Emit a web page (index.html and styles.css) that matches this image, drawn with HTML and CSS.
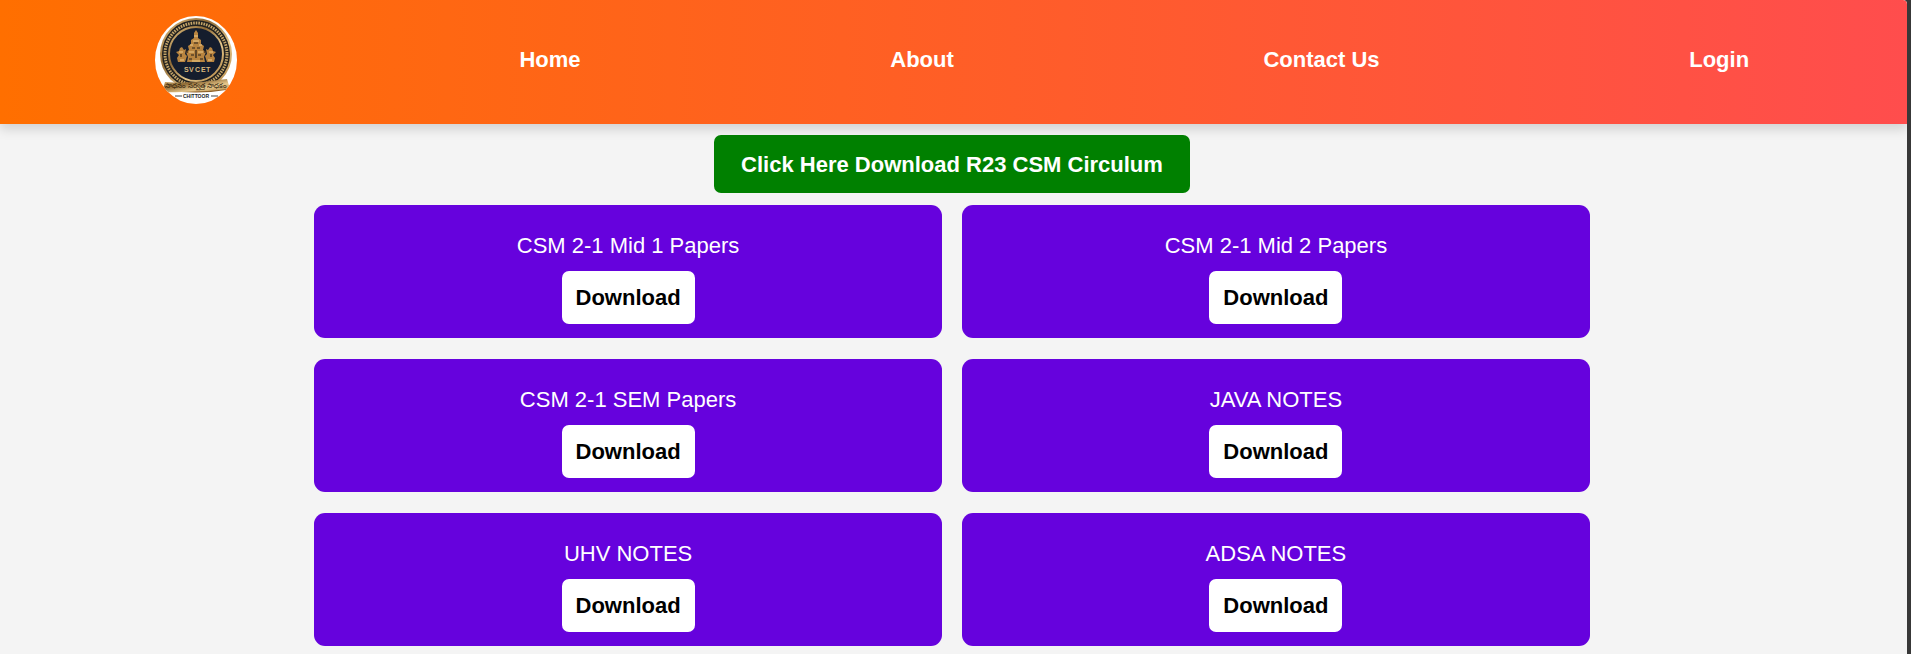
FILE: index.html
```html
<!DOCTYPE html>
<html lang="en">
<head>
<meta charset="utf-8">
<meta name="viewport" content="width=device-width, initial-scale=1">
<title>CSM Papers and Notes</title>
<link rel="stylesheet" href="styles.css">
</head>
<body>
<header class="site-header">
  <nav class="nav" aria-label="Main">
    <a class="brand" href="#" aria-label="SVCET Chittoor">
      <svg class="logo" viewBox="0 0 82 88" aria-hidden="true">
        <defs>
          <clipPath id="badge"><ellipse cx="41" cy="44" rx="41" ry="44"/></clipPath>
          <linearGradient id="gold" x1="0" y1="0" x2="1" y2="1">
            <stop offset="0" stop-color="#e8c888"/><stop offset=".35" stop-color="#8f6a35"/><stop offset=".65" stop-color="#e6c88c"/><stop offset="1" stop-color="#a87a38"/>
          </linearGradient>
        </defs>
        <g clip-path="url(#badge)">
          <rect width="82" height="88" fill="#fff"/>
          <ellipse cx="41" cy="38" rx="36" ry="36" fill="url(#gold)"/>
          <ellipse cx="41" cy="38" rx="34" ry="34" fill="#22211f"/>
          <ellipse cx="41" cy="38" rx="31" ry="31" fill="none" stroke="#c3a468" stroke-width="3" stroke-dasharray="1.600 1"/>
          <ellipse cx="41" cy="38" rx="27" ry="27" fill="#151d2d" stroke="url(#gold)" stroke-width="2"/>
          <g fill="#b8843f">
            <path d="M41 14l2 3v5l3 2v4l3 2-1 4 3 2-2 5 1 5H32l1-5-2-5 3-2-1-4 3-2v-4l3-2v-5z"/>
            <path d="M25 32l2-1 2 3 2-1-1 5 2 2-2 6h-7l-1-4 2-3-3-3 3-1zM57 32l-2-1-2 3-2-1 1 5-2 2 2 6h7l1-4-2-3 3-3-3-1z"/>
          </g>
          <g fill="none" stroke="#efca87" stroke-width="1">
            <path d="M39 20h4M38 25h6M35 29h3M44 29h3M34 36h5M43 36h5M37 45h8M24 36h4M54 36h4M25 44h4M53 44h4"/>
          </g>
          <g fill="none" stroke="#2a2119" stroke-width="1.200">
            <path d="M39 27h4M37 32h3M42 32h3M36 39h3M43 39h3M34 43h3M45 43h3M41 34v8M26 38v3M56 38v3M32 34v3M50 34v3"/>
          </g>
          <text class="logo-name" x="29 34 40 46 51" y="56">SVCET</text>
          <path d="M12 67Q41 72 70 67L71 74Q41 79 11 74z" fill="#8d6028"/>
          <path d="M10 66Q41 68 72 63L75 73Q41 77 7 76z" fill="url(#gold)"/>
          <text class="logo-motto" x="41" y="72" text-anchor="middle">సాధనం సర్వత్ర సాధకం</text>
          <path d="M20 80h7M56 80h7" stroke="#444" stroke-width="1"/>
          <text class="logo-town" x="41" y="82" text-anchor="middle">CHITTOOR</text>
        </g>
      </svg>
    </a>
    <a class="nav-link" href="#">Home</a>
    <a class="nav-link" href="#">About</a>
    <a class="nav-link" href="#">Contact Us</a>
    <a class="nav-link" href="#">Login</a>
  </nav>
</header>
<main class="content">
  <a class="curriculum" href="#">Click Here Download R23 CSM Circulum</a>
  <div class="cards">
    <section class="card"><p class="card-title">CSM 2-1 Mid 1 Papers</p><button class="download" type="button">Download</button></section>
    <section class="card"><p class="card-title">CSM 2-1 Mid 2 Papers</p><button class="download" type="button">Download</button></section>
    <section class="card"><p class="card-title">CSM 2-1 SEM Papers</p><button class="download" type="button">Download</button></section>
    <section class="card"><p class="card-title">JAVA NOTES</p><button class="download" type="button">Download</button></section>
    <section class="card"><p class="card-title">UHV NOTES</p><button class="download" type="button">Download</button></section>
    <section class="card"><p class="card-title">ADSA NOTES</p><button class="download" type="button">Download</button></section>
  </div>
</main>
</body>
</html>
```
FILE: styles.css
```css
* {
  box-sizing: border-box;
}

html {
  background: #383838;
}

body {
  min-height: 100vh;
  margin: 0 4px 0 0;
  border-top-right-radius: 4px;
  background: #f4f4f4;
  font: 22px/26px "Liberation Sans", Arial, sans-serif;
}

.site-header {
  padding: 16px 3px 20px 0;
  background: linear-gradient(90deg, #ff6f00, #ff4d4d);
  border-top-right-radius: 4px;
  box-shadow: 0 5px 12px rgba(0, 0, 0, 0.15);
  clip-path: inset(0 0 -20px 0);
}

.nav {
  display: flex;
  align-items: center;
  justify-content: space-around;
}

.brand {
  margin-right: -27px;
}

.logo {
  display: block;
  width: 82px;
  height: 88px;
}

.logo-name {
  fill: #d9b87c;
  font: bold 7px "Liberation Sans", Arial, sans-serif;
}

.logo-motto {
  fill: #2a1a0a;
  font: 7px "Noto Sans", sans-serif;
}

.logo-town {
  fill: #222;
  font: bold 5px "Liberation Sans", Arial, sans-serif;
}

.nav-link {
  color: #fff;
  font-weight: bold;
  text-decoration: none;
}

.content {
  display: flex;
  flex-direction: column;
  align-items: center;
  gap: 12px;
  padding: 11px 3px 8px 0;
}

.curriculum {
  padding: 17px 27px 15px;
  border-radius: 7px;
  background: #008000;
  color: #fff;
  font-weight: bold;
  text-decoration: none;
}

.cards {
  display: grid;
  grid-template-columns: 1fr 1fr;
  gap: 21px 20px;
  width: 67%;
}

.card {
  display: flex;
  flex-direction: column;
  align-items: center;
  gap: 12px;
  padding: 28px 14px 14px;
  border-radius: 11px;
  background: #6602dd;
}

.card-title {
  margin: 0;
  color: #fff;
}

.download {
  padding: 14px;
  border: 0;
  border-radius: 7px;
  background: #fff;
  color: #000;
  font: bold 22px/25px "Liberation Sans", Arial, sans-serif;
  cursor: pointer;
}
```
